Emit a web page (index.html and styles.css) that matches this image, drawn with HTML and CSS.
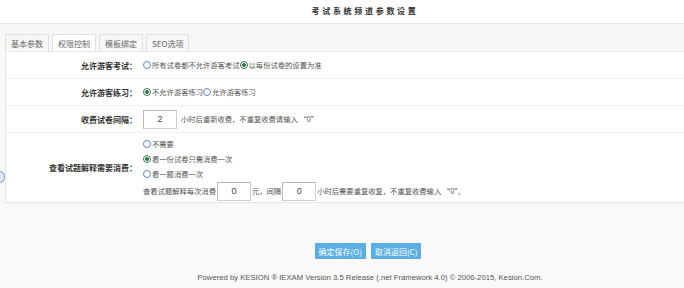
FILE: index.html
```html
<!DOCTYPE html>
<html lang="zh-CN">
<head>
    <meta charset="UTF-8">
    <title>考试系统频道参数设置</title>
    <link rel="stylesheet" href="styles.css">
</head>
<body>
    <div class="top">
        <h1 class="title">考试系统频道参数设置</h1>
    </div>

    <div class="tabs">
        <span class="tab">基本参数</span>
        <span class="tab active">权限控制</span>
        <span class="tab">模板绑定</span>
        <span class="tab">SEO选项</span>
    </div>

    <div class="panel">
        <div class="row">
            <div class="label">允许游客考试：</div>
            <div class="value">
                <label class="opt"><span class="radio"></span>所有试卷都不允许游客考试</label>
                <label class="opt"><span class="radio on"></span>以每份试卷的设置为准</label>
            </div>
        </div>
        <div class="row">
            <div class="label">允许游客练习：</div>
            <div class="value">
                <label class="opt"><span class="radio on"></span>不允许游客练习</label>
                <label class="opt"><span class="radio"></span>允许游客练习</label>
            </div>
        </div>
        <div class="row">
            <div class="label">收费试卷间隔：</div>
            <div class="value">
                <input class="num" type="text" value="2"> <span class="note">小时后重新收费，不重复收费请输入 “0”</span>
            </div>
        </div>
        <div class="row tall">
            <div class="label">查看试题解释需要消费：</div>
            <div class="value stack">
                <label class="opt"><span class="radio"></span>不需要</label>
                <label class="opt"><span class="radio on"></span>看一份试卷只需消费一次</label>
                <label class="opt"><span class="radio"></span>看一题消费一次</label>
                <div class="line">
                    查看试题解释每次消费<input class="num" type="text" value="0">元，间隔<input class="num" type="text" value="0">小时后需要重复收复，不重复收费输入 “0”。
                </div>
            </div>
        </div>
    </div>

    <div class="actions">
        <button class="btn">确定保存(O)</button>
        <button class="btn">取消返回(C)</button>
    </div>

    <div class="footer">Powered by KESION ® IEXAM Version 3.5 Release (.net Framework 4.0) © 2006-2015, Kesion.Com.</div>

    <span class="side-toggle"></span>
</body>
</html>
```

FILE: styles.css
```css
body {
    margin: 0;
    background: #f9f9f9;
    color: #555;
    font-family: "Noto Sans CJK SC", "Liberation Sans", sans-serif;
    font-size: 7.3px;
    position: relative;
}

.top {
    background: #fff;
    height: 23px;
    border-bottom: 1px solid #e8e8e8;
    text-align: center;
    padding-left: 46px;
}

.title {
    margin: 0;
    font-size: 8px;
    font-weight: bold;
    letter-spacing: 2.7px;
    line-height: 21px;
    color: #333;
}

.tabs {
    display: flex;
    gap: 3px;
    padding: 10px 0 0 5px;
    background: #f7f7f7;
    height: 17px;
}

.tab {
    border: 1px solid #e0e0e0;
    border-bottom: none;
    padding: 0 5px;
    line-height: 17px;
    font-size: 8px;
    color: #666;
    background: #f7f7f7;
}

.tab.active {
    background: #fff;
}

.panel {
    margin-left: 5px;
    background: #fff;
    border: 1px solid #e6e6e6;
    border-right: none;
}

.row {
    display: flex;
    align-items: center;
    height: 26px;
    border-bottom: 1px solid #f0f0f0;
}

.row.tall {
    height: 69px;
    border-bottom: none;
}

.label {
    width: 131px;
    text-align: right;
    font-weight: bold;
    font-size: 8px;
    color: #333;
}

.value {
    padding-left: 6px;
    display: flex;
    align-items: center;
}

.value.stack {
    flex-direction: column;
    align-items: flex-start;
    padding-top: 2px;
}

.stack .opt {
    line-height: 15px;
}

.opt {
    display: inline-flex;
    align-items: center;
}

.radio {
    display: inline-block;
    width: 6px;
    height: 6px;
    border: 1px solid #5b8ac4;
    border-radius: 50%;
    margin-right: 1px;
    background: #fff;
}

.radio.on {
    border-color: #3f6f55;
    background: radial-gradient(circle, #2e7d4f 0, #2e7d4f 1.6px, #fff 2.2px);
}

.num {
    box-sizing: border-box;
    width: 34px;
    height: 19px;
    border: 1px solid #d0d0d0;
    border-top-color: #b8b8b8;
    border-left-color: #b8b8b8;
    text-align: center;
    font-family: "Liberation Sans", sans-serif;
    font-size: 9px;
    color: #444;
    padding: 0;
    margin: 0;
}

.note {
    margin-left: 4px;
}

.line {
    display: flex;
    align-items: center;
}

.line .num {
    margin: 0 1px;
}

.actions {
    display: flex;
    justify-content: center;
    gap: 5px;
    margin-top: 40px;
    padding-left: 52px;
}

.btn {
    height: 16px;
    padding: 0 4px;
    border: none;
    background: #5aaee2;
    color: #fff;
    font-family: "Noto Sans CJK SC", sans-serif;
    font-size: 8px;
}

.footer {
    text-align: center;
    margin-top: 14px;
    padding-left: 56px;
    font-family: "Liberation Sans", sans-serif;
    font-size: 7.7px;
    color: #555;
}

.side-toggle {
    position: absolute;
    left: -5px;
    top: 171px;
    width: 8px;
    height: 10px;
    border: 1px solid #7aa3d6;
    border-radius: 50%;
    background: #dfe9f6;
}
```
